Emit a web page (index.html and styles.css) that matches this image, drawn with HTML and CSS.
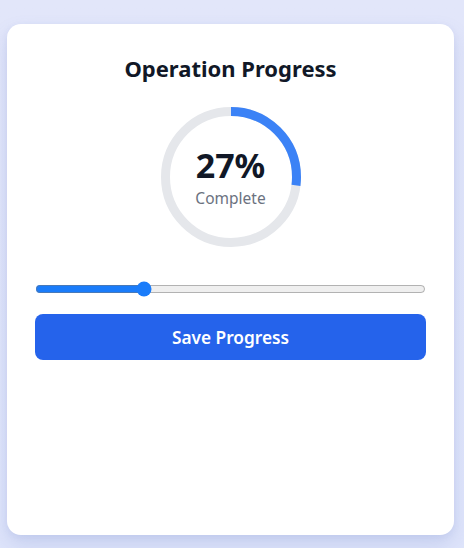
FILE: index.html
```html
<!DOCTYPE html>
<html lang="en">
<head>
<meta charset="utf-8">
<title>Operation Progress</title>
<link rel="stylesheet" href="styles.css">
</head>
<body>
<main class="card">
  <h1 class="title">Operation Progress</h1>
  <div class="ring">
    <svg class="ring-svg" width="140" height="140" viewBox="0 0 140 140">
      <circle cx="70" cy="70" r="65.5" fill="none" stroke="#e5e7eb" stroke-width="9"/>
      <circle cx="70" cy="70" r="65.5" fill="none" stroke="#3b82f6" stroke-width="9"
        stroke-dasharray="111.12 500" transform="rotate(-90 70 70)"/>
    </svg>
    <div class="ring-label">
      <span class="pct">27%</span>
      <span class="sub">Complete</span>
    </div>
  </div>
  <input class="slider" type="range" min="0" max="100" value="27">
  <button class="btn" type="button">Save Progress</button>
</main>
</body>
</html>
```
FILE: styles.css
```css
* { box-sizing: border-box; }
html, body { height: 100%; }
body {
  margin: 0;
  padding: 24px 10px 13px 7px;
  background: linear-gradient(180deg, #e2e6fa 0%, #dfe5fb 100%);
  font-family: "Noto Sans", "Open Sans", sans-serif;
}
.card {
  width: 447px;
  height: 511px;
  background: #fff;
  border-radius: 14px;
  padding: 28px;
  box-shadow: 0 10px 20px rgba(90, 110, 190, 0.18), 0 2px 6px rgba(90, 110, 190, 0.08);
  display: flex;
  flex-direction: column;
  align-items: center;
}
.title {
  margin: 0;
  font-size: 22px;
  line-height: 32px;
  font-weight: 700;
  color: #111827;
}
.ring {
  margin-top: 23px;
  width: 140px;
  height: 140px;
  position: relative;
}
.ring-svg { display: block; }
.ring-label {
  position: absolute;
  inset: 0;
  display: flex;
  flex-direction: column;
  align-items: center;
  justify-content: center;
}
.pct {
  font-size: 34px;
  font-weight: 700;
  line-height: 38px;
  color: #111827;
}
.sub {
  margin-top: 4px;
  font-size: 15.5px;
  line-height: 20px;
  color: #6b7280;
}
.slider {
  margin: 34px 0 0;
  width: 391px;
  accent-color: #1a7cfa;
}
.btn {
  margin-top: 17px;
  width: 391px;
  height: 46px;
  border: none;
  border-radius: 8px;
  background: #2563eb;
  color: #fff;
  font-family: inherit;
  font-size: 17.3px;
  font-weight: 600;
}
```
